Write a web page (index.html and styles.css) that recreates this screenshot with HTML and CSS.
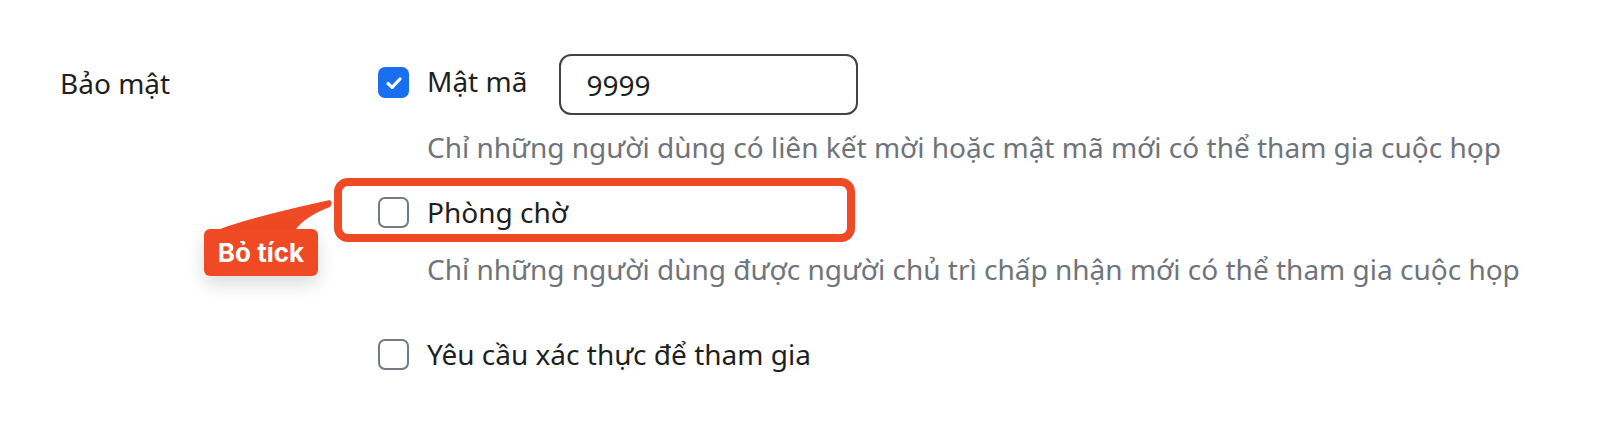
FILE: index.html
```html
<!DOCTYPE html>
<html lang="vi">
<head>
    <meta charset="UTF-8">
    <title>Bảo mật</title>
    <link rel="stylesheet" href="styles.css">
</head>
<body>
<div class="settings">
    <div class="setting-row">
        <div class="setting-label">Bảo mật</div>
        <div class="options">
            <div class="option option-first">
                <span class="checkbox checked">
                    <svg width="22" height="22" viewBox="0 0 22 22"><path d="M5 11.5 L9.2 15.4 L17 7" fill="none" stroke="#fff" stroke-width="3.2" stroke-linecap="round" stroke-linejoin="round"/></svg>
                </span>
                <span class="option-text">Mật mã</span>
                <input type="text" class="line-edit" value="9999">
            </div>
            <div class="hint hint-first">Chỉ những người dùng có liên kết mời hoặc mật mã mới có thể tham gia cuộc họp</div>

            <div class="option option-marked">
                <span class="checkbox"></span>
                <span class="option-text">Phòng chờ</span>
                <!-- chú thích -->
                <div class="mark-box"></div>
                <svg class="callout-tail" width="130" height="36" viewBox="0 0 130 36">
                    <path d="M16 35 Q52 22 126 6 Q129 9 126 13 Q102 22 92 35 Z" fill="#f04a24"/>
                </svg>
                <div class="callout">Bỏ tíck</div>
            </div>
            <div class="hint hint-second">Chỉ những người dùng được người chủ trì chấp nhận mới có thể tham gia cuộc họp</div>

            <div class="option option-last">
                <span class="checkbox"></span>
                <span class="option-text">Yêu cầu xác thực để tham gia</span>
            </div>
        </div>
    </div>
</div>
</body>
</html>
```

FILE: styles.css
```css
body {
    margin: 0;
    font-family: 'Noto Sans', 'Open Sans', sans-serif;
    background: #fff;
    color: #1f1f1f;
}
.settings {
    padding-top: 54px;
    padding-left: 60px;
}
.setting-row {
    display: flex;
}
.setting-label {
    width: 318px;
    font-size: 28px;
    line-height: 36px;
    margin-top: 11px;
}
.options {
    display: flex;
    flex-direction: column;
}
.option {
    display: flex;
    align-items: center;
    font-size: 28px;
    line-height: 36px;
}
.option-first {
    align-items: flex-start;
}
.option-first .checkbox {
    margin-top: 13px;
}
.option-first .option-text {
    margin-top: 9px;
}
.option-marked {
    position: relative;
    margin-top: 29px;
}
.option-last {
    margin-top: 49px;
}
.checkbox {
    width: 31px;
    height: 31px;
    box-sizing: border-box;
    border: 2px solid #747a83;
    border-radius: 7px;
    margin-right: 18px;
    display: flex;
    align-items: center;
    justify-content: center;
    flex-shrink: 0;
}
.checkbox.checked {
    border: none;
    background-color: #1a6ff0;
}
.line-edit {
    width: 299px;
    height: 61px;
    box-sizing: border-box;
    margin-left: 32px;
    padding: 0 0 0 25px;
    border: 2px solid #3f4247;
    border-radius: 12px;
    font-family: 'Noto Sans', sans-serif;
    font-size: 28px;
    color: #1f1f1f;
    outline: none;
}
.hint {
    margin-left: 49px;
    font-size: 28px;
    line-height: 36px;
    color: #6f747c;
}
.hint-first {
    margin-top: 14px;
}
.hint-second {
    margin-top: 21px;
}
.mark-box {
    position: absolute;
    left: -44px;
    top: -16px;
    width: 521px;
    height: 64px;
    box-sizing: border-box;
    border: 8px solid #f04a24;
    border-radius: 14px;
}
.callout-tail {
    position: absolute;
    left: -174px;
    top: 0;
}
.callout {
    position: absolute;
    left: -174px;
    top: 35px;
    width: 114px;
    height: 47px;
    box-sizing: border-box;
    background-color: #f04a24;
    color: #fff;
    border-radius: 6px;
    font-family: 'Inter', sans-serif;
    font-weight: 700;
    font-size: 26px;
    line-height: 47px;
    text-align: center;
    box-shadow: 0 8px 18px rgba(0, 0, 0, 0.14);
}
```
